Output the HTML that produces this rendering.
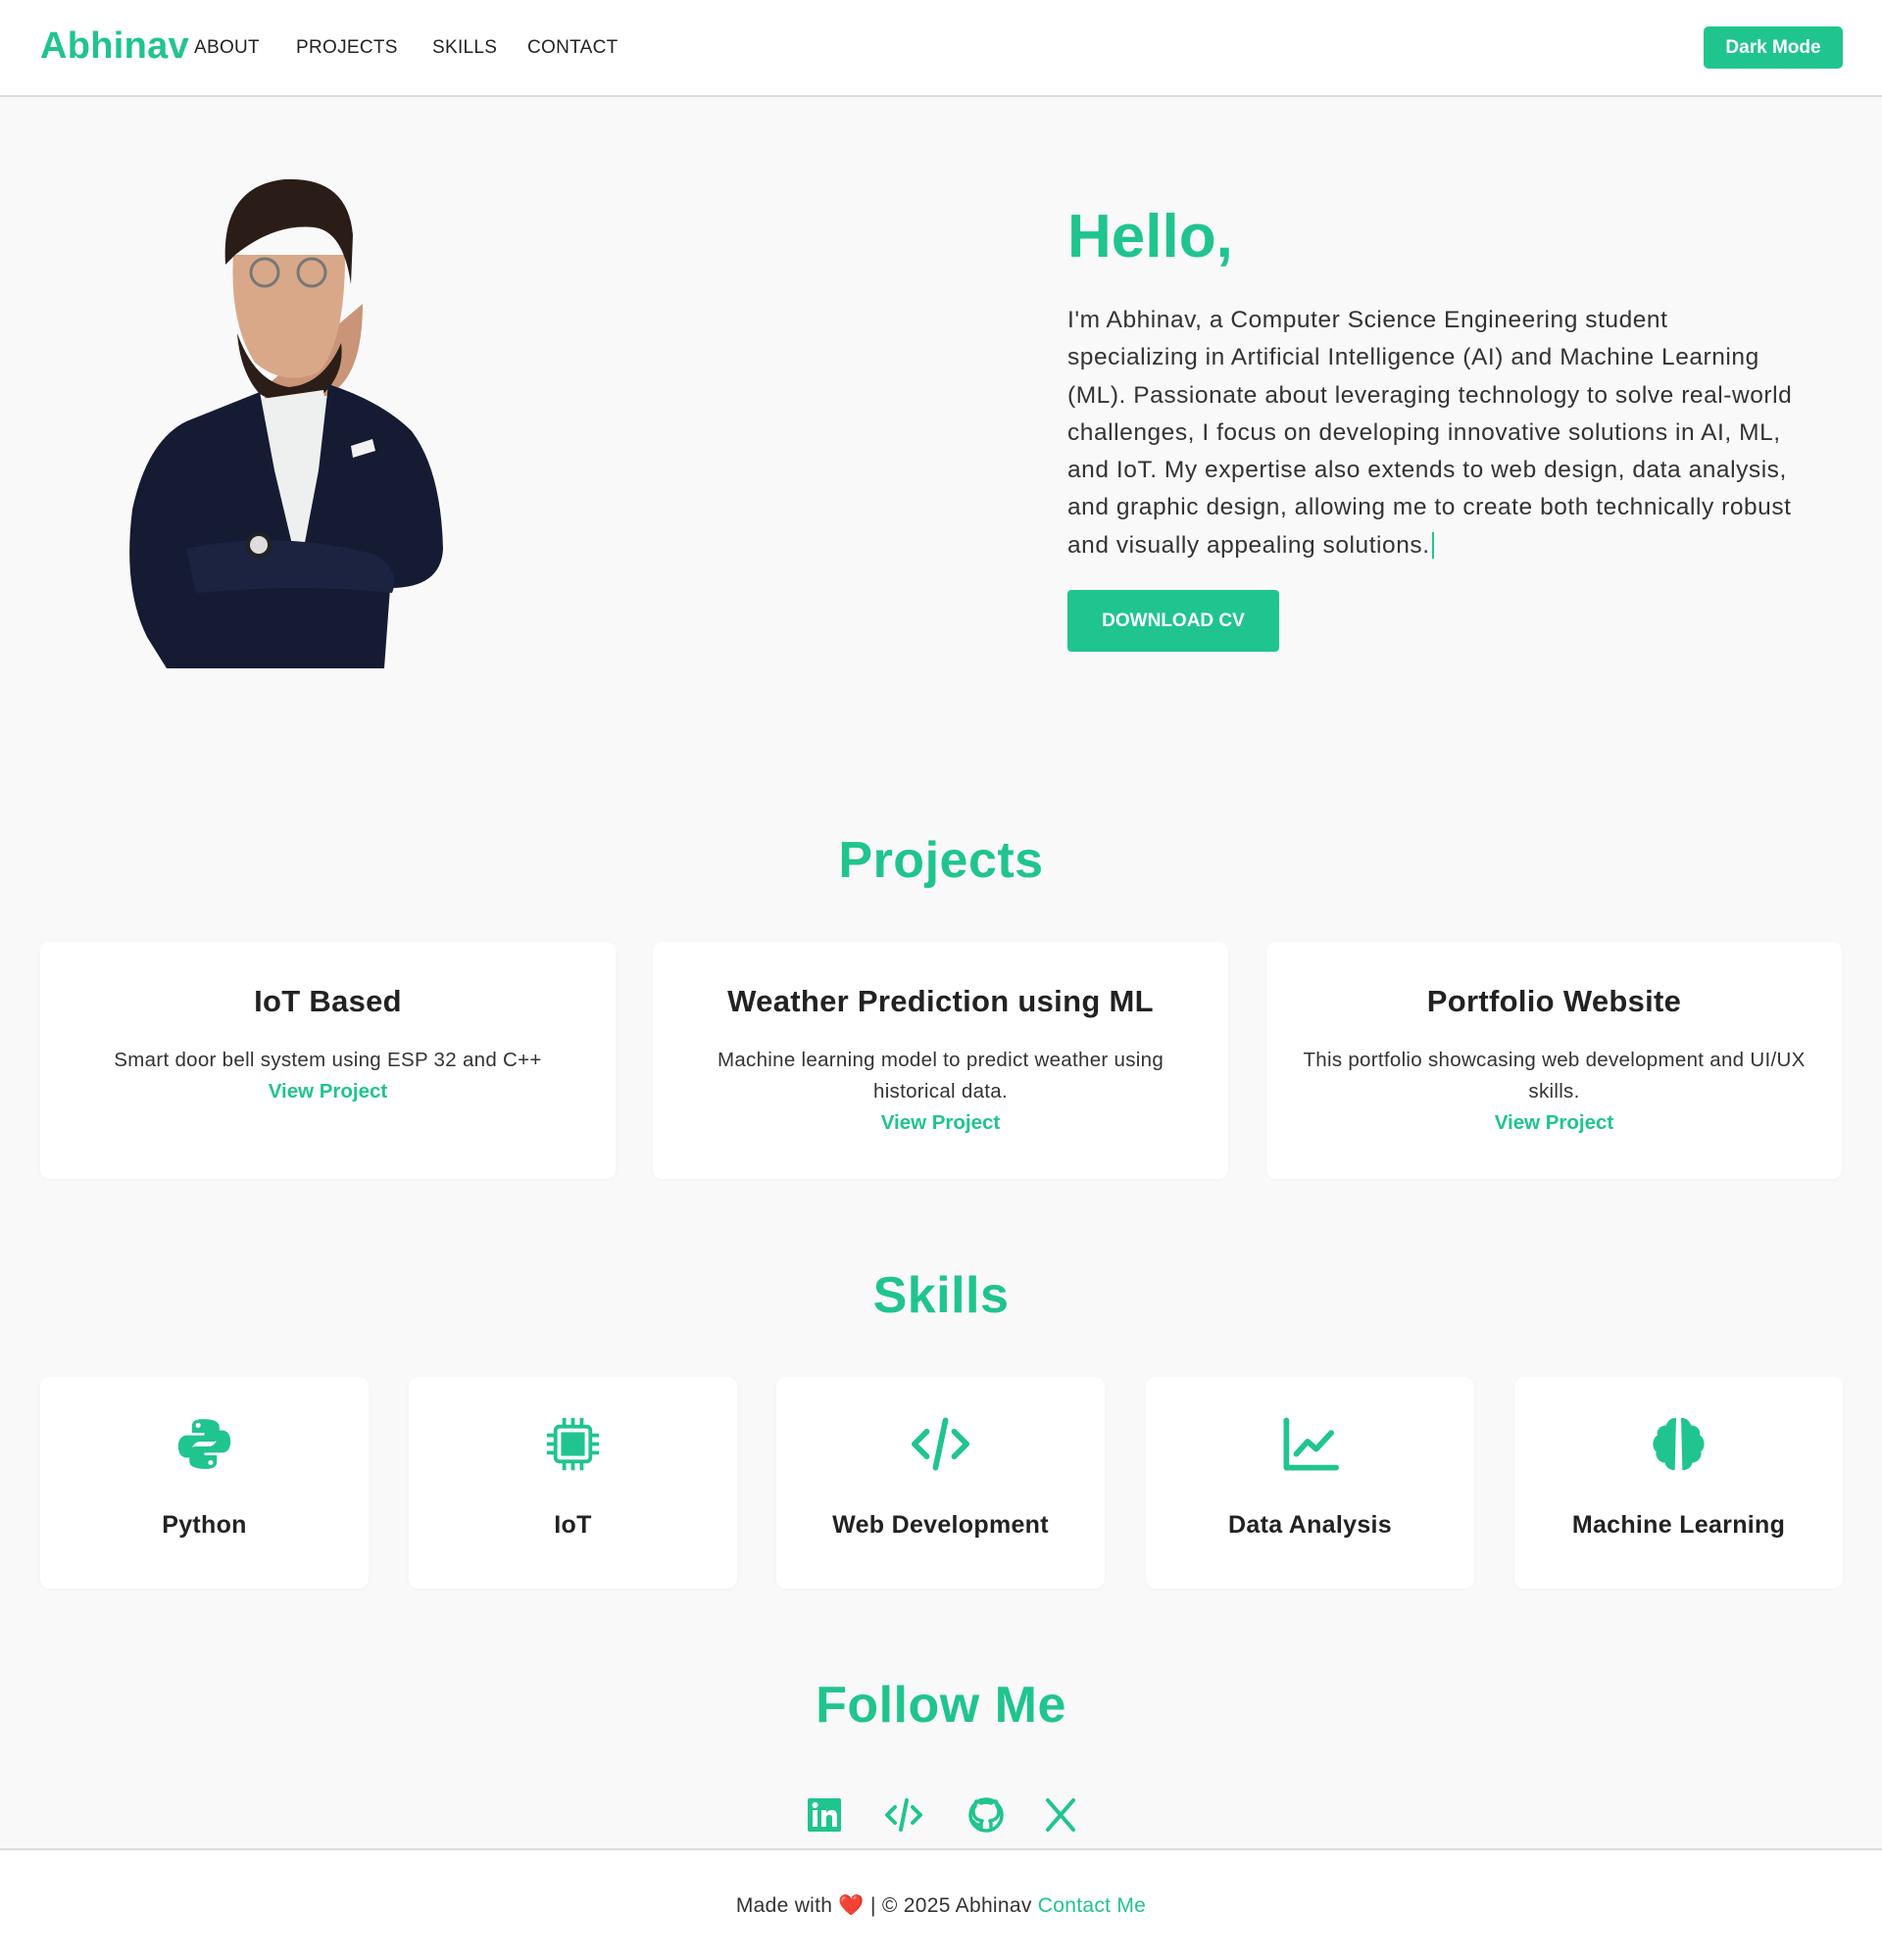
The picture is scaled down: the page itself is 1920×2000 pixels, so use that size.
<!DOCTYPE html>
<html><head><meta charset="utf-8"><style>
*{box-sizing:border-box;margin:0;padding:0}
body{width:1920px;height:2000px;background:#f9f9f9;font-family:"Liberation Sans",sans-serif;color:#222;position:relative;overflow:hidden}
.g{color:#20c48f}
header{position:absolute;left:0;top:0;width:1920px;height:99px;background:#fff;border-bottom:2px solid #ddd}
.logo{position:absolute;left:41px;top:26px;font-size:38px;font-weight:bold;color:#20c48f;letter-spacing:0.3px}
.nav a{position:absolute;top:38px;font-size:19px;color:#222;text-decoration:none;letter-spacing:0.3px}
.dm{position:absolute;left:1738px;top:27px;width:142px;height:43px;background:#20c48f;color:#fff;border-radius:5px;font-weight:bold;font-size:19px;text-align:center;line-height:43px}
.hello{position:absolute;left:1089px;top:206px;font-size:62px;font-weight:bold;color:#20c48f}
.para{position:absolute;left:1089px;top:308px;width:748px;font-size:24.5px;letter-spacing:0.55px;line-height:38.3px;color:#333}
.cv{position:absolute;left:1089px;top:602px;width:216px;height:63px;background:#20c48f;color:#fff;border-radius:4px;font-weight:bold;font-size:19px;text-align:center;line-height:63px}
h2{position:absolute;left:0;width:1920px;text-align:center;font-size:52px;font-weight:bold;color:#20c48f;letter-spacing:0.5px}
.card{position:absolute;background:#fff;border-radius:10px;text-align:center;box-shadow:0 1px 4px rgba(0,0,0,0.03)}
.pc{top:961px;width:587px;height:242px;padding-top:43px}
.pc h3{font-size:31px;font-weight:bold;color:#222;margin-bottom:26px;letter-spacing:0.3px}
.pc p{font-size:20.5px;line-height:32px;color:#333;padding:0 30px;letter-spacing:0.3px}
.pc a{display:block;font-size:20.5px;line-height:32px;font-weight:bold;color:#20c48f;text-decoration:none}
.sc{top:1405px;width:335px;height:216px}
.sc svg{position:absolute;left:137px;top:38px;width:61px;height:61px}
.sc div{position:absolute;left:0;top:137px;width:100%;font-size:25px;font-weight:bold;color:#222;letter-spacing:0.3px}
.soc svg{position:absolute;top:1833px;width:38px;height:38px}
footer{position:absolute;left:0;top:1886px;width:1920px;height:114px;background:#fff;border-top:2px solid #ddd;text-align:center;font-size:21px;padding-top:45px;color:#333;letter-spacing:0.3px}
</style></head><body>
<header>
<div class="logo">Abhinav</div>
<div class="nav"><a style="left:198px">ABOUT</a><a style="left:302px">PROJECTS</a><a style="left:441px">SKILLS</a><a style="left:538px">CONTACT</a></div>
<div class="dm">Dark Mode</div>
</header>

<svg style="position:absolute;left:130px;top:180px" width="330" height="502" viewBox="0 0 330 502">
<path d="M240 130 Q240 210 200 225 L195 262 Q165 290 140 262 L140 215 Z" fill="#c99478"/>
<path d="M108 80 Q104 150 130 190 Q160 215 195 200 Q222 170 222 80 Z" fill="#d9a889"/>
<path d="M112 160 Q130 210 165 215 Q200 212 218 170 Q222 200 200 222 Q165 240 135 222 Q115 200 112 160 Z" fill="#2b1e18"/>
<path d="M100 90 Q95 10 160 3 Q225 0 230 60 L228 110 Q220 55 190 52 Q150 48 110 80 Z" fill="#2a1d17"/>
<circle cx="140" cy="98" r="14" fill="none" stroke="#777" stroke-width="3"/><circle cx="188" cy="98" r="14" fill="none" stroke="#777" stroke-width="3"/>
<path d="M130 228 L200 218 L215 330 L170 420 L140 330 Z" fill="#eef0f0"/>
<path d="M135 220 L60 250 Q20 270 5 340 Q-5 420 20 470 L40 502 L262 502 L268 420 Q320 420 322 380 Q320 300 290 260 Q260 230 205 212 L195 300 L175 405 L150 300 Z" fill="#141b33"/>
<path d="M60 380 Q150 360 250 385 Q280 400 270 425 Q180 415 70 425 Z" fill="#1b2340"/>
<path d="M228 275 L250 268 L253 280 L230 287 Z" fill="#f2f2f2"/>
<circle cx="134" cy="376" r="11" fill="#ddd" stroke="#222" stroke-width="4"/>
</svg>

<div class="hello">Hello,</div>
<div class="para">I'm Abhinav, a Computer Science Engineering student specializing in Artificial Intelligence (AI) and Machine Learning (ML). Passionate about leveraging technology to solve real-world challenges, I focus on developing innovative solutions in AI, ML, and IoT. My expertise also extends to web design, data analysis, and graphic design, allowing me to create both technically robust and visually appealing solutions.<span style="border-left:2px solid #20c48f;margin-left:2px"></span></div>
<div class="cv">DOWNLOAD CV</div>

<h2 style="top:848px">Projects</h2>
<div class="card pc" style="left:41px"><h3>IoT Based</h3><p>Smart door bell system using ESP 32 and C++</p><a>View Project</a></div>
<div class="card pc" style="left:666px"><h3>Weather Prediction using ML</h3><p>Machine learning model to predict weather using historical data.</p><a>View Project</a></div>
<div class="card pc" style="left:1292px"><h3>Portfolio Website</h3><p>This portfolio showcasing web development and UI/UX skills.</p><a>View Project</a></div>

<h2 style="top:1292px">Skills</h2>
<div class="card sc" style="left:41px"><svg viewBox="0 0 48 48"><path d="M23 4c-8 0-9 3-9 6v5h10v2H10c-4 0-7 3-7 9s3 9 7 9h4v-6c0-4 3-7 7-7h10c3 0 5-2 5-5v-7c0-3-3-6-13-6z" fill="#20c48f"/><path d="M25 44c8 0 9-3 9-6v-5H24v-2h14c4 0 7-3 7-9s-3-9-7-9h-4v6c0 4-3 7-7 7H17c-3 0-5 2-5 5v7c0 3 3 6 13 6z" fill="#20c48f"/><circle cx="19" cy="9" r="2" fill="#fff"/><circle cx="29" cy="39" r="2" fill="#fff"/></svg><div>Python</div></div>
<div class="card sc" style="left:417px"><svg viewBox="0 0 48 48" fill="none" stroke="#20c48f" stroke-width="3"><rect x="10" y="10" width="28" height="28" rx="3"/><rect x="16" y="16" width="16" height="16" fill="#20c48f"/><path d="M17 3v7M24 3v7M31 3v7M17 38v7M24 38v7M31 38v7M3 17h7M3 24h7M3 31h7M38 17h7M38 24h7M38 31h7"/></svg><div>IoT</div></div>
<div class="card sc" style="left:792px"><svg viewBox="0 0 48 48" fill="none" stroke="#20c48f" stroke-width="4.5" stroke-linecap="round" stroke-linejoin="round"><path d="M13 14L3 24l10 10M35 14l10 10-10 10M28 5L20 43"/></svg><div>Web Development</div></div>
<div class="card sc" style="left:1169px"><svg viewBox="0 0 48 48" fill="none" stroke="#20c48f" stroke-width="4.5" stroke-linecap="round" stroke-linejoin="round"><path d="M5 5v38h40M13 32l9-10 7 6 12-13"/></svg><div>Data Analysis</div></div>
<div class="card sc" style="left:1545px"><svg viewBox="0 0 48 48" fill="#20c48f"><path d="M22 3c-5 0-7 3-8 6-5 0-8 4-7 8-4 2-5 10-1 13-1 5 3 9 7 9 1 4 4 6 8 6zM26 3c5 0 7 3 8 6 5 0 8 4 7 8 4 2 5 10 1 13 1 5-3 9-7 9-1 4-4 6-8 6z"/></svg><div>Machine Learning</div></div>

<h2 style="top:1710px">Follow Me</h2>
<div class="soc">
<svg style="left:822px" viewBox="0 0 38 38"><rect x="2" y="2" width="34" height="34" rx="2" fill="#20c48f"/><rect x="7" y="14" width="5" height="17" fill="#fff"/><circle cx="9.5" cy="9" r="3" fill="#fff"/><path d="M16 14h5v3c1-2 3-3 6-3 4 0 5 3 5 7v10h-5v-9c0-2-1-3-3-3s-3 1-3 3v9h-5z" fill="#fff"/></svg>
<svg style="left:903px" viewBox="0 0 38 38" fill="none" stroke="#20c48f" stroke-width="4" stroke-linecap="round" stroke-linejoin="round"><path d="M10 11l-8 8 8 8M28 11l8 8-8 8M22 4l-6 30"/></svg>
<svg style="left:987px" viewBox="0 0 38 38" fill="none" stroke="#20c48f" stroke-width="3.5" stroke-linecap="round" stroke-linejoin="round"><path d="M14 34v-5c-6 1-7-3-9-4M24 34v-5c0-2 0-3-1-4 5-1 9-3 9-10 0-2-1-4-2-5 0-2 0-4-1-5 0 0-2 0-5 2-3-1-7-1-10 0-3-2-5-2-5-2-1 1-1 3-1 5-1 1-2 3-2 5 0 7 4 9 9 10-1 1-1 2-1 4"/><circle cx="19" cy="19" r="16"/></svg>
<svg style="left:1063px" viewBox="0 0 38 38" fill="none" stroke="#20c48f" stroke-width="4" stroke-linecap="round"><path d="M6 4l26 30M32 4L6 34"/></svg>
</div>

<footer>Made with <span style="color:#e32636">&#10084;&#65039;</span> | © 2025 Abhinav <span class="g">Contact Me</span></footer>
</body></html>
